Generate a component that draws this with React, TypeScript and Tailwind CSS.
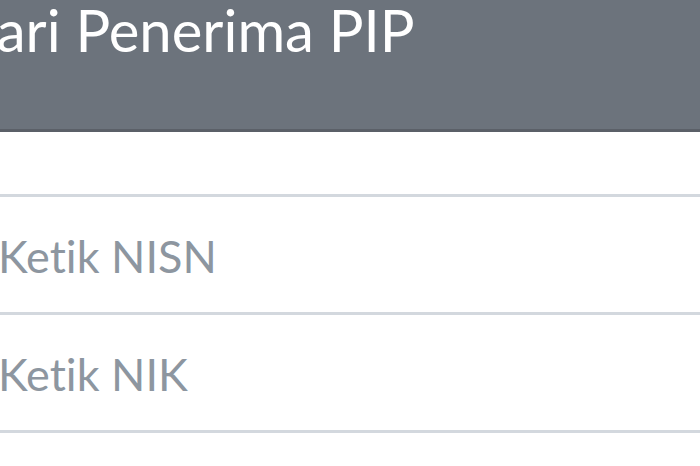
const fontStack = "font-['Lato','Noto_Sans',sans-serif] [font-variant-ligatures:none]";

function Field({ placeholder }: { placeholder: string }) {
  return (
    <input
      type="text"
      placeholder={placeholder}
      className={`block h-[118px] w-full border-b-[3px] border-[#d3d8de] bg-white pl-0 pt-[2px] indent-[-2px] text-[45px] text-[#8d96a0] outline-none placeholder:text-[#8d96a0] ${fontStack}`}
    />
  );
}

export default function App() {
  return (
    <div className={`h-[466px] w-[700px] overflow-hidden bg-white ${fontStack}`}>
      <div className="h-[132px] border-b-[3px] border-[#5b6068] bg-[#6c737c]">
        <h1 className="-ml-[42px] text-[58px] leading-[60px] font-normal whitespace-nowrap text-white">
          Cari Penerima PIP
        </h1>
      </div>
      <div className="h-[62px]" />
      <div className="border-t-[3px] border-[#d3d8de]">
        <Field placeholder="Ketik NISN" />
        <Field placeholder="Ketik NIK" />
      </div>
    </div>
  );
}
